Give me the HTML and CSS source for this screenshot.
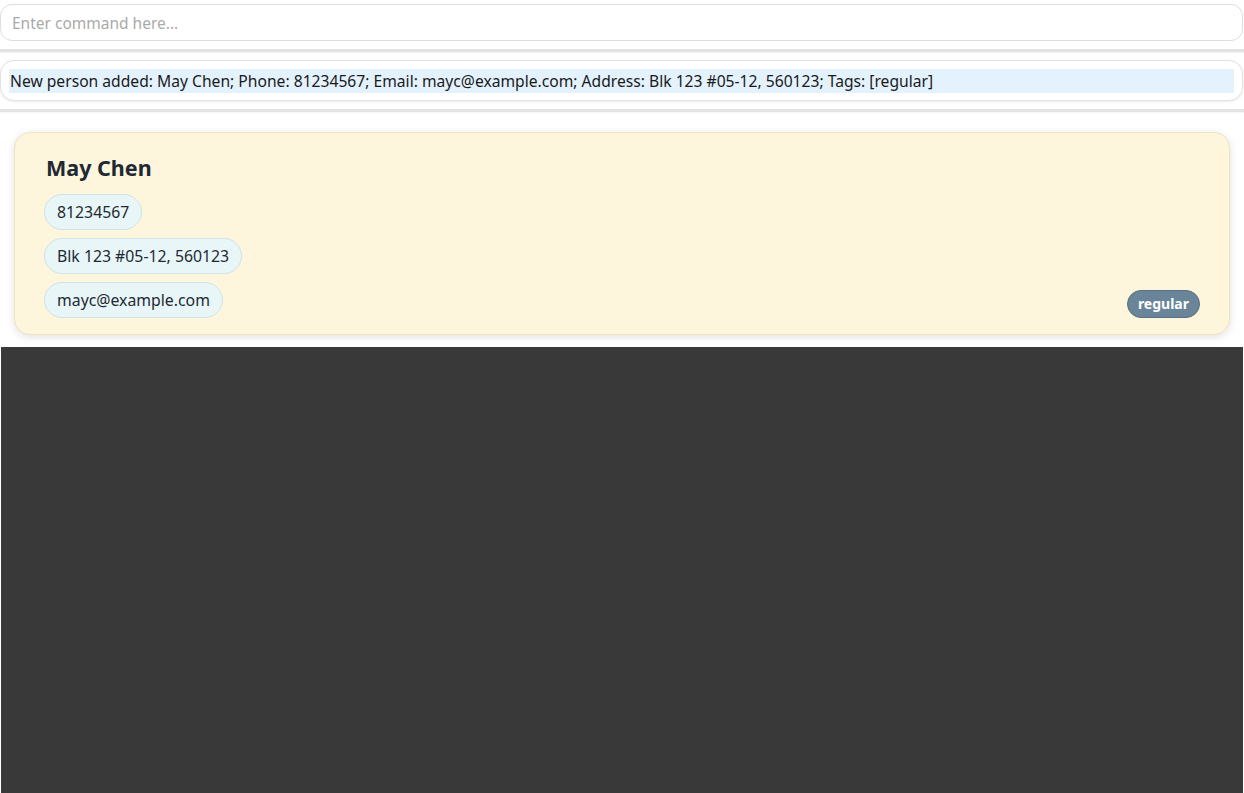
FILE: index.html
```html
<!DOCTYPE html>
<html>
<head>
<meta charset="utf-8">
<link rel="stylesheet" href="styles.css">
</head>
<body>
<div class="app">
  <div class="top">
    <div class="command-box">
      <input class="command-input" type="text" placeholder="Enter command here...">
    </div>
    <div class="divider"></div>
    <div class="result-box">
      <div class="result-text">New person added: May Chen; Phone: 81234567; Email: mayc@example.com; Address: Blk 123 #05-12, 560123; Tags: [regular]</div>
    </div>
    <div class="divider"></div>
  </div>
  <div class="list">
    <div class="card">
      <div class="card-main">
        <div class="name">May Chen</div>
        <div class="chip">81234567</div>
        <div class="chip">Blk 123 #05-12, 560123</div>
        <div class="chip">mayc@example.com</div>
      </div>
      <div class="tags">
        <span class="tag">regular</span>
      </div>
    </div>
  </div>
  <div class="dark"></div>
</div>
</body>
</html>
```
FILE: styles.css
```css
html, body {
  margin: 0;
  padding: 0;
  background: #ffffff;
  font-family: "Noto Sans", "Open Sans", sans-serif;
  color: #1f2933;
}
.app {
  width: 1244px;
  height: 793px;
  display: flex;
  flex-direction: column;
  overflow: hidden;
}
.top {
  padding-top: 4px;
}
.command-box {
  height: 37px;
  margin: 0 1px 0 0;
  border: 1px solid #dedede;
  border-radius: 12px;
  background: #fff;
  box-sizing: border-box;
  display: flex;
  align-items: center;
  padding: 0 11px;
}
.command-input {
  border: none;
  outline: none;
  width: 100%;
  font-family: inherit;
  font-size: 15.5px;
  color: #333;
  padding: 0;
  background: transparent;
}
.command-input::placeholder {
  color: #aaaaaa;
}
.divider {
  height: 3px;
  margin: 8px 0;
  background: #e3e3e3;
  box-shadow: 0 1px 1px rgba(0,0,0,0.04);
}
.result-box {
  height: 41px;
  margin-right: 1px;
  border: 1px solid #e2e2e2;
  border-radius: 14px;
  box-shadow: 0 1px 3px rgba(0,0,0,0.08);
  background: #fff;
  box-sizing: border-box;
  padding: 8px 8px 0 8px;
}
.result-text {
  background: #e3f2fd;
  height: 24px;
  line-height: 24px;
  font-size: 15.65px;
  color: #1a1a1a;
  white-space: nowrap;
  padding-left: 1px;
}
.list {
  padding: 12px 14px 12px 14px;
}
.card {
  background: #fdf5dc;
  border: 1px solid #f1e4bf;
  border-radius: 16px;
  box-shadow: 0 2px 8px rgba(0,0,0,0.12);
  height: 203px;
  box-sizing: border-box;
  padding: 15px 29px 16px 29px;
  display: flex;
  justify-content: space-between;
  align-items: flex-end;
}
.card-main {
  display: flex;
  flex-direction: column;
  align-items: flex-start;
  gap: 8px;
}
.name {
  font-size: 21.5px;
  font-weight: 700;
  color: #1f2933;
  line-height: 28px;
  margin: 0 0 4px 2px;
}
.chip {
  height: 36px;
  box-sizing: border-box;
  line-height: 34px;
  padding: 0 12px;
  border: 1px solid #cfe3e8;
  border-radius: 18px;
  background: #e8f6f8;
  font-size: 15.8px;
  color: #1f2933;
}
.tags {
  display: flex;
  margin-bottom: 0;
}
.tag {
  display: inline-block;
  height: 28px;
  line-height: 26px;
  box-sizing: border-box;
  padding: 0 10px;
  border-radius: 14px;
  background: #6a8599;
  border: 1px solid #566f82;
  color: #fff;
  font-weight: 700;
  font-size: 14px;
}
.dark {
  flex: 1;
  margin: 0 1px;
  background: #393939;
}
```
